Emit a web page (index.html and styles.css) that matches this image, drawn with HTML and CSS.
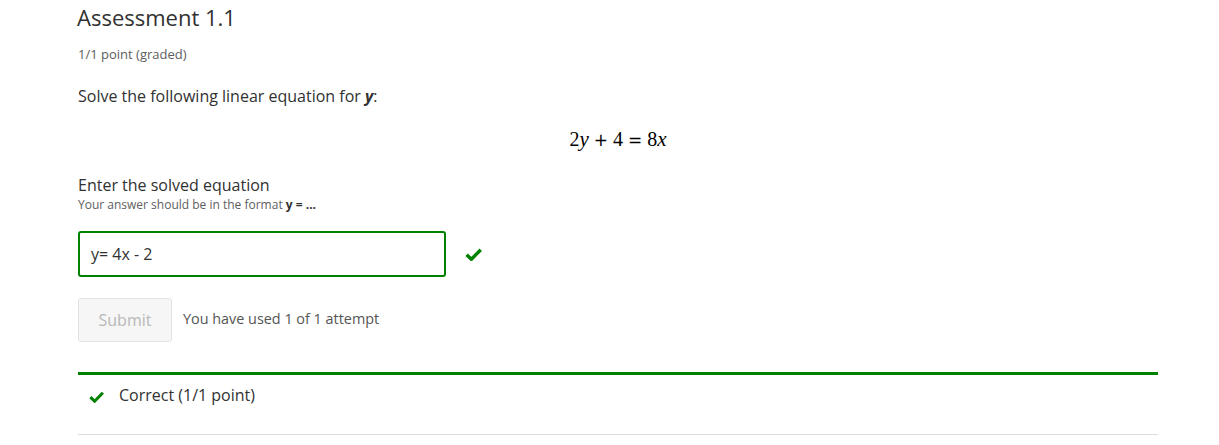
FILE: index.html
```html
<!DOCTYPE html>
<html>
<head>
<meta charset="utf-8">
<link rel="stylesheet" href="styles.css">
</head>
<body>
<div class="problem">
  <h2 class="title">Assessment 1.1</h2>
  <div class="points">1/1 point (graded)</div>
  <p class="prompt">Solve the following linear equation for <b><i>y</i></b>:</p>
  <div class="equation"><span class="num">2</span><i>y</i><span class="op">+</span><span class="num">4</span><span class="op">=</span><span class="num">8</span><i>x</i></div>
  <div class="label">Enter the solved equation</div>
  <div class="hint">Your answer should be in the format <b>y = ...</b></div>
  <div class="answer-row">
    <div class="input">y= 4x - 2</div>
    <svg class="check big" viewBox="0 0 16 12" width="17" height="13"><path d="M1.5 6.2 L6 10.5 L14.8 1.5" fill="none" stroke="#008100" stroke-width="3.2"/></svg>
  </div>
  <div class="actions">
    <div class="submit">Submit</div>
    <div class="attempts">You have used 1 of 1 attempt</div>
  </div>
  <div class="result">
    <svg class="check" viewBox="0 0 16 12" width="15" height="12"><path d="M1.5 6.2 L6 10.5 L14.8 1.5" fill="none" stroke="#008100" stroke-width="3.2"/></svg>
    <span>Correct (1/1 point)</span>
  </div>
</div>
</body>
</html>
```
FILE: styles.css
```css
html, body { margin: 0; padding: 0; background: #fff; }
body { font-family: "Open Sans", "Liberation Sans", sans-serif; color: #313131; }
.problem { width: 1080px; margin-left: 78px; }
.title { font-weight: 400; font-size: 22px; line-height: 30px; margin: 2px 0 0 -1px; color: #313131; }
.points { font-size: 13px; color: #5e5e5e; margin-top: 13px; line-height: 18px; }
.prompt { font-size: 16px; line-height: 22px; margin: 22px 0 0; }
.prompt b i { font-weight: 700; }
.equation { text-align: center; font-family: "DejaVu Serif", "Liberation Serif", serif; font-size: 19px; line-height: 26px; margin-top: 19px; color: #000; }
.equation i { font-family: "Liberation Serif", serif; font-size: 21px; }
.equation .num { font-family: "Liberation Serif", serif; font-size: 20px; }
.equation .op { margin: 0 5px; font-family: "DejaVu Sans", sans-serif; font-size: 17px; }
.label { font-size: 16px; line-height: 20px; margin-top: 22px; }
.hint { font-size: 12px; color: #5e5e5e; line-height: 17px; margin-top: 1px; }
.hint b { font-weight: 700; color: #313131; }
.answer-row { display: flex; align-items: center; margin-top: 18px; gap: 19px; }
.input { box-sizing: border-box; width: 368px; height: 46px; border: 2px solid #008100; border-radius: 3px; padding: 0 11px; font-size: 16px; line-height: 42px; color: #313131; }
.check { display: block; }
.actions { display: flex; align-items: center; margin-top: 21px; gap: 11px; }
.submit { box-sizing: border-box; width: 94px; height: 44px; border: 1px solid #e2e2e2; border-radius: 3px; background: #f6f6f6; color: #b8b8b8; font-size: 16px; line-height: 42px; text-align: center; }
.attempts { font-size: 14.4px; color: #555; margin-top: -4px; }
.result { border-top: 3px solid #008100; border-bottom: 1px solid #ddd; margin-top: 30px; height: 63px; box-sizing: border-box; display: flex; align-items: flex-start; padding: 9px 0 0 11px; gap: 15px; font-size: 16px; color: #313131; }
.result .check { margin-top: 7px; }
.result span { line-height: 22px; }
```
